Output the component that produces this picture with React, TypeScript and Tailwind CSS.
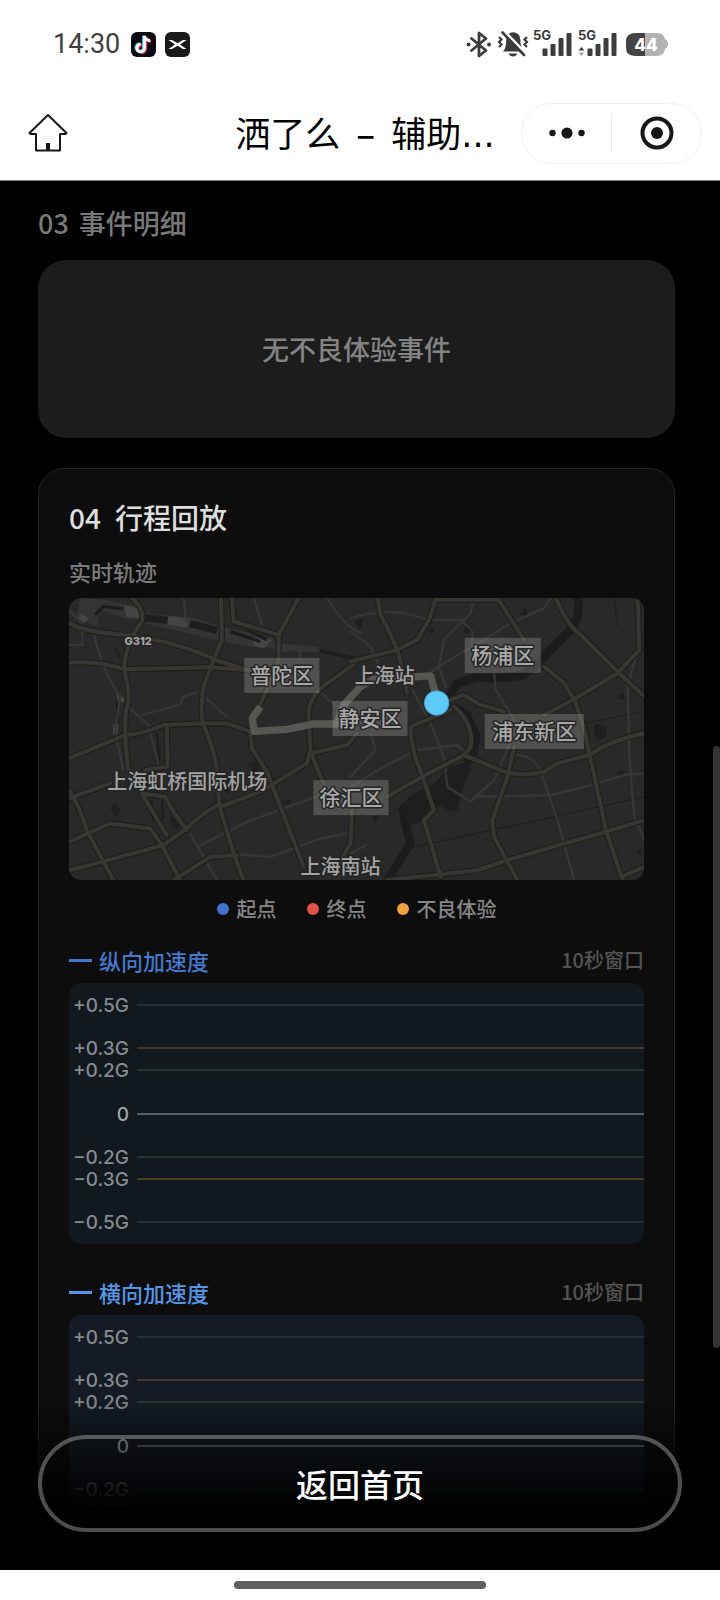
import React from "react";

const MAJOR_WEST = [
  "M27 218 Q120 212 190 238 L450 232 L555 240 L600 250",
  "M27 100 Q80 128 195 135 Q350 155 470 212 L560 240",
  "M215 24 Q255 60 245 95 Q195 160 192 240 Q215 320 198 360 Q190 430 205 540",
  "M482 24 L485 150 Q455 220 430 290 Q420 360 428 400 Q470 500 470 550 L478 650 L520 790 L550 870",
  "M27 505 L195 435 Q240 435 310 405 L428 400 L500 400 L570 425",
  "M515 24 L520 95 L655 135 L655 210 L620 300 L590 360",
  "M715 24 L655 135",
  "M570 425 L575 475 L620 545 L660 650 L730 830",
  "M480 650 L600 605 L740 520 L750 480",
  "M480 640 Q410 680 380 715 L310 765 L125 815 L27 840",
  "M27 600 Q60 650 80 720 L160 870",
  "M27 625 L150 580",
  "M27 755 L150 700 L270 715 L305 765 L360 870",
  "M320 405 L322 530 L255 540",
  "M245 610 L315 620 Q340 670 380 720 M245 610 L320 735",
  "M340 870 L450 800 L530 795",
  "M900 205 Q860 240 800 280 Q745 320 745 370 L750 480 Q770 540 790 580",
  "M750 490 L860 465 L890 430",
  "M875 660 L870 760 L830 830",
];

const MAJOR_EAST = [
  "M82 24 L90 75 Q130 150 145 195 L170 310",
  "M440 30 L255 30 L235 90 L200 150 L140 180 L0 215",
  "M440 24 L520 150",
  "M580 230 L640 280 L670 330 Q700 400 715 490 Q740 600 765 720 L815 870",
  "M615 24 Q650 110 690 135 L800 245 L880 320",
  "M860 24 L865 180 L800 250 L665 330 L580 375",
  "M300 330 L340 315 L390 345 L460 365",
  "M180 410 Q180 470 205 530 L250 660 L220 690 L270 860",
  "M110 620 L215 560 L340 495 L460 545 Q520 560 580 545 L620 520 L715 495 Q780 450 880 430",
  "M490 470 L470 560 L425 690 L430 740 L500 870",
  "M110 870 L380 840 L470 810 L640 760 L765 725 L880 690",
  "M820 856 L880 830",
  "M310 350 Q370 400 360 470 L340 495",
  "M180 410 L300 360",
];

const MINOR_WEST = [
  "M245 375 L360 345 L370 320 L415 305 L500 380",
  "M100 130 Q130 250 180 320 L165 430 L190 540",
  "M27 60 L65 100 L68 165 L30 165",
  "M370 24 L378 95",
  "M580 24 L605 105",
  "M800 24 Q850 110 900 130",
  "M420 765 L560 695 L780 615",
  "M500 790 L630 800 L780 745 L860 730",
  "M390 730 L470 870",
  "M270 430 L295 520",
  "M210 355 L270 410",
  "M655 190 L715 170 L720 210 M770 300 L830 350",
];

const MINOR_EAST = [
  "M0 85 Q80 60 160 70 L240 90 L330 90 L365 125 L365 160",
  "M370 30 L360 70 L280 150 L265 230 L285 290",
  "M600 24 L580 55 L480 100 L400 150 L280 220 L220 260",
  "M430 250 L435 300 L490 390",
  "M500 495 Q560 500 575 560 L620 690 L670 870",
  "M880 550 L830 552 L700 590 L600 615 L380 620",
  "M380 615 L430 570 L490 430",
  "M185 300 L240 400 L280 500 L290 590 L360 635 L380 615",
  "M0 590 L100 530 L200 480 L320 465 L345 490",
  "M865 160 L830 290 L835 500 L850 680 L880 750",
  "M60 430 L75 480 L0 560",
  "M0 125 L60 170 L85 225",
  "M0 790 L45 765",
];

function Roads({ major, minor }: { major: string[]; minor: string[] }) {
  return (
    <g fill="none" strokeLinejoin="round" strokeLinecap="round">
      <g stroke="#363636" strokeWidth="7">
        {minor.map((d) => (
          <path key={d} d={d} />
        ))}
      </g>
      <g stroke="#1f1f1c" strokeWidth="19">
        {major.map((d) => (
          <path key={d} d={d} />
        ))}
      </g>
      <g stroke="#373631" strokeWidth="12">
        {major.map((d) => (
          <path key={d} d={d} />
        ))}
      </g>
    </g>
  );
}

const DISTRICTS = [
  { name: "普陀区", x: 175, y: 60, w: 75 },
  { name: "杨浦区", x: 395, y: 40, w: 76 },
  { name: "静安区", x: 263, y: 103, w: 75 },
  { name: "浦东新区", x: 415, y: 116, w: 99 },
  { name: "徐汇区", x: 244, y: 182, w: 75 },
];

const PLACES = [
  { name: "上海站", x: 315, y: 85 },
  { name: "上海虹桥国际机场", x: 118, y: 191 },
  { name: "上海南站", x: 271, y: 276 },
];

function TrackMap() {
  return (
    <svg
      viewBox="0 0 574 282"
      preserveAspectRatio="xMidYMid slice"
      className="mt-[11px] block h-[282px] w-full rounded-xl bg-[#292929]"
      role="img"
      aria-label="实时轨迹"
    >
      <g transform="translate(-9 -8) scale(0.33333)">
        <g fill="#343434">
          <path d="M60 24 L130 30 L230 50 L245 90 L190 85 L120 60 L110 110 L50 80Z" />
          <path d="M250 70 L400 85 L480 110 L640 145 L640 175 L560 170 L470 150 L250 100Z" />
          <path d="M640 160 L775 170 L775 188 L640 182Z" />
        </g>
        <g fill="#454545">
          <path d="M190 45 L230 55 L240 85 L200 82Z M325 78 L385 88 L380 112 L322 104Z M575 140 L635 150 L610 175 L580 168Z M60 70 L85 85 L75 100 L55 90Z" />
          <path d="M168 310 L195 325 L190 338 L172 332Z M160 405 L175 402 L172 432 L158 432Z" />
        </g>
        <g stroke="#1d1d1d" fill="none">
          <path strokeWidth="22" d="M255 84 L322 92 M390 102 L470 122" />
          <path strokeWidth="10" d="M105 75 L130 50 L190 58 M510 125 L600 155 M560 120 L620 150 M780 183 L880 205" />
          <path strokeWidth="6" d="M165 175 L180 205 M290 430 L298 520 M170 330 L175 400 M275 630 L280 690 M305 630 L308 690" />
        </g>
        <g fill="#202020">
          <path d="M150 655 L165 640 L182 660 L170 680Z M560 520 L590 515 L602 535 L585 550Z M330 675 L360 700 L350 720 L330 700Z M665 635 L690 625 L690 645Z M485 600 L510 590 L505 612Z" />
          <path d="M880 95 L905 85 L905 110Z" />
        </g>
        <g transform="translate(870 0)">
          <g fill="none" stroke="#1c1c1c" strokeLinejoin="round">
            <path strokeWidth="26" d="M680 24 Q695 90 640 140 L570 210 L520 255 Q450 268 380 262 L320 280 L295 320" />
            <path strokeWidth="20" d="M310 345 L350 375 L380 440 L370 490 L345 520" />
            <path strokeWidth="26" d="M155 650 L165 700 L180 760 L110 870" />
          </g>
          <g fill="#1e1e1e">
            <path d="M145 650 L190 610 L250 580 L300 530 L355 515 L360 540 L335 600 L320 660 L290 665 L270 645 L220 690 L180 705Z" />
            <path d="M730 400 L768 410 L765 440 L745 450 L730 435Z M795 325 L815 305 L822 330Z M505 75 L525 55 L530 75Z M340 105 L362 125 L345 130Z M10 95 L38 90 L30 118Z M790 552 L815 542 L818 555Z M855 790 L868 775 L872 798Z M65 680 L85 678 L75 700Z M230 120 L252 112 L245 132Z" />
          </g>
          <path d="M190 770 L540 695 L880 620 M700 400 L880 365 M790 24 L800 110" fill="none" stroke="#1f1f1f" strokeWidth="4" />
        </g>
        <Roads major={MAJOR_WEST} minor={MINOR_WEST} />
        <g transform="translate(870 0)">
          <Roads major={MAJOR_EAST} minor={MINOR_EAST} />
        </g>
        <path
          d="M600 350 L576 385 L582 424 L680 418 L760 402 L830 402 L850 345 L900 290 L940 268 L1110 258 L1124 310"
          fill="none"
          stroke="#565652"
          strokeWidth="22"
          strokeLinejoin="round"
        />
      </g>
      <g fill="#a3a3a3" textAnchor="middle" stroke="#252525" strokeWidth="3" paintOrder="stroke" strokeLinejoin="round">
        <text x="69" y="47" className="font-['Inter',sans-serif] text-[11px] font-extrabold">
          G312
        </text>
        {PLACES.map((p) => (
          <text key={p.name} x={p.x} y={p.y} className="text-[20px] font-medium">
            {p.name}
          </text>
        ))}
      </g>
      {DISTRICTS.map((d) => (
        <g key={d.name}>
          <rect x={d.x} y={d.y} width={d.w} height="35" fill="#c8c8c4" fillOpacity="0.25" />
          <text
            x={d.x + d.w / 2}
            y={d.y + 25}
            textAnchor="middle"
            fill="#a8a8a8"
            stroke="#262626"
            strokeWidth="3"
            paintOrder="stroke"
            strokeLinejoin="round"
            className="text-[21px] font-medium"
          >
            {d.name}
          </text>
        </g>
      ))}
      <circle cx="367" cy="105" r="12" fill="#5ccbfb" stroke="#4fb4e2" />
    </svg>
  );
}

const GRID = [
  { label: "+0.5G", y: 22, tone: "stroke-[#262e35]" },
  { label: "+0.3G", y: 65, tone: "stroke-[#46382a]" },
  { label: "+0.2G", y: 87, tone: "stroke-[#26392f]" },
  { label: "0", y: 131, tone: "stroke-[#5a6067]" },
  { label: "−0.2G", y: 174, tone: "stroke-[#22382a]" },
  { label: "−0.3G", y: 196, tone: "stroke-[#4a3e20]" },
  { label: "−0.5G", y: 239, tone: "stroke-[#252d34]" },
];

function Chart({ title, text, bar, panel }: { title: string; text: string; bar: string; panel: string }) {
  return (
    <section>
      <div className="flex h-8 items-center justify-between font-medium">
        <h3 className={`flex items-center gap-[7px] text-[22px] leading-8 ${text}`}>
          <span className={`h-[3px] w-[23px] ${bar}`} />
          {title}
        </h3>
        <span className="text-[20px] leading-8 text-[#545454]">10秒窗口</span>
      </div>
      <svg className={`mt-[7px] block h-[261px] w-full rounded-xl ${panel}`} role="img" aria-label={title}>
        {GRID.map((g) => (
          <g key={g.label}>
            <line x1="68" x2="100%" y1={g.y} y2={g.y} strokeWidth="2" className={g.tone} />
            <text
              x="60"
              y={g.y + 7}
              textAnchor="end"
              className={
                g.label === "0"
                  ? "fill-[#a3a7ab] font-['Inter',sans-serif] text-[19px] font-medium"
                  : "fill-[#868a8e] font-['Inter',sans-serif] text-[19px] font-medium"
              }
            >
              {g.label}
            </text>
          </g>
        ))}
      </svg>
    </section>
  );
}

function StatusIcons() {
  return (
    <svg width="206" height="42" viewBox="0 -7 206 42" fill="none" aria-hidden="true">
      <g stroke="#3c3c3c" strokeWidth="2.8" strokeLinejoin="round" strokeLinecap="round">
        <path d="M5.500 8.500 L20 20.500 L13 26 V3 L20 8.500 L5.500 20.500" />
      </g>
      <circle cx="2.500" cy="14.500" r="2" fill="#3c3c3c" />
      <circle cx="23" cy="14.500" r="2" fill="#3c3c3c" />
      <path d="M37 21.500 Q40 18 40 13 Q40 5 44 3 Q48 1 52 4 Q54.500 6 54.500 13 Q55 18 57.500 21.500Z" fill="#3c3c3c" />
      <path d="M42.500 23.500 h9 q-1.500 3 -4.500 3 t-4.500 -3Z" fill="#3c3c3c" />
      <path d="M37 0 L61 25" stroke="#fff" strokeWidth="3" />
      <path d="M36.500 2.500 L58 25" stroke="#3c3c3c" strokeWidth="2.600" strokeLinecap="round" />
      <path d="M33 7 l2.500 2.500 -2.500 2.500 2.500 2.500 -2.500 2.500 M61 7 l-2.500 2.500 2.500 2.500 -2.500 2.500 2.500 2.500" stroke="#3c3c3c" strokeWidth="2.200" />
      <g fill="#3c3c3c">
        <text x="67" y="10" className="font-['Inter',sans-serif] text-[13px] font-bold">5G</text>
        <text x="112" y="10" className="font-['Inter',sans-serif] text-[13px] font-bold">5G</text>
        {[0, 45].map((dx) => (
          <g key={dx} transform={`translate(${dx} 0)`}>
            <rect x="76.500" y="18.500" width="5" height="7.500" rx="1" />
            <rect x="84.500" y="14" width="5" height="12" rx="1" />
            <rect x="92.500" y="8" width="5" height="18" rx="1" />
            <rect x="100.500" y="3" width="5" height="23" rx="1" />
          </g>
        ))}
        <path d="M112.500 20.500 L115.500 17 L118.500 20.500Z" />
        <path d="M112.500 22.500 L115.500 26 L118.500 22.500Z" fill="#aaa" />
      </g>
      <path d="M169 3 h22 q7 0 8 6 q3 1 3 5 t-3 5 q-1 7 -8 7 h-22Z" fill="#b3b3b3" />
      <path d="M179 3 h-9 q-10 0 -10 8 v7 q0 8 10 8 h9Z" fill="#444" />
      <text x="180" y="21" textAnchor="middle" fill="#fff" className="font-['Inter',sans-serif] text-[17px] font-extrabold">
        44
      </text>
    </svg>
  );
}

export default function App() {
  return (
    <div className="flex h-screen flex-col bg-black font-['Noto_Sans_CJK_SC',sans-serif]">
      <header className="border-b border-[#7c7c7c] bg-white">
        <div className="flex h-[88px] items-center justify-between pl-[53px] pr-12">
          <div className="flex items-center gap-[9px]">
            <span className="w-[69px] font-['Roboto',sans-serif] text-[27px] leading-8 text-[#3f3f3f]">14:30</span>
            <svg width="25" height="25" viewBox="0 0 25 25" aria-hidden="true">
              <rect width="25" height="25" rx="6" fill="#0c0b12" />
              <g fill="none" strokeWidth="2.800">
                <path d="M13.500 4 V16 a3.800 3.800 0 1 1 -3.800 -3.800 M13.500 4 q1 4.500 5.500 4.500" stroke="#3fd8dc" transform="translate(-1 -0.500)" />
                <path d="M13.500 4 V16 a3.800 3.800 0 1 1 -3.800 -3.800 M13.500 4 q1 4.500 5.500 4.500" stroke="#ec3a62" transform="translate(1.200 0.800)" />
                <path d="M13.500 4 V16 a3.800 3.800 0 1 1 -3.800 -3.800 M13.500 4 q1 4.500 5.500 4.500" stroke="#fff" />
              </g>
            </svg>
            <svg width="25" height="25" viewBox="0 0 25 25" aria-hidden="true">
              <rect width="25" height="25" rx="6" fill="#1a1a18" />
              <path d="M3.500 8 L7 8 L12.500 11.200 L18 8 L21.500 8 L15 12.500 L21.500 17 L18 17 L12.500 13.800 L7 17 L3.500 17 L10 12.500Z" fill="#fff" />
            </svg>
          </div>
          <StatusIcons />
        </div>
        <div className="flex h-[92px] items-center pb-[2px]">
          <div className="flex flex-1 pl-7">
            <button type="button" aria-label="首页">
              <svg width="40" height="40" viewBox="0 0 40 40" fill="none" stroke="#171717" strokeWidth="2" strokeLinejoin="round">
                <path d="M20 2 L38.500 20 L37.500 21 H32 V37.500 H8 V21 H2.500 L1.500 20Z" />
                <path d="M18 30 h4 v7 h-4Z" fill="#171717" stroke="none" />
              </svg>
            </button>
          </div>
          <h1 className="flex gap-4 text-[35px] leading-[48px] text-black">
            <span>洒了么</span>
            <span className="font-medium">–</span>
            <span>
              辅助<span className="font-['DejaVu_Sans',sans-serif]">...</span>
            </span>
          </h1>
          <div className="flex flex-1 justify-end pr-[18px]">
            <div className="flex h-[61px] w-[181px] items-center rounded-full border border-[#f0f0f0]">
              <button type="button" aria-label="更多" className="flex h-full flex-1 items-center justify-center">
                <svg width="36" height="12" viewBox="0 0 36 12" fill="#171717">
                  <circle cx="3.500" cy="6" r="3.200" />
                  <circle cx="18" cy="6" r="5.600" />
                  <circle cx="32.500" cy="6" r="3.200" />
                </svg>
              </button>
              <span className="h-10 w-px bg-[#ececec]" />
              <button type="button" aria-label="关闭" className="flex h-full flex-1 items-center justify-center">
                <svg width="34" height="34" viewBox="0 0 34 34">
                  <circle cx="17" cy="17" r="14.500" fill="none" stroke="#171717" strokeWidth="4" />
                  <circle cx="17" cy="17" r="6" fill="#171717" />
                </svg>
              </button>
            </div>
          </div>
        </div>
      </header>

      <div className="relative min-h-0 flex-1">
        <main className="h-full overflow-y-auto pb-32 pl-[38px] pr-[45px] [scrollbar-width:none]">
          <h2 className="mt-6 flex gap-2.5 text-[27px] font-medium leading-9 text-[#797979]">
            <span>03</span>
            <span>事件明细</span>
          </h2>
          <div className="mt-[19px] rounded-[28px] bg-[#1c1c1c] py-[71px] text-center text-[27px] font-medium leading-9 text-[#838383]">
            无不良体验事件
          </div>

          <div className="mt-[30px] rounded-[26px] border border-[#242424] bg-[#0d0d0d] px-[30px] pb-8 pt-[30px]">
            <h2 className="flex gap-3.5 text-[28px] font-medium leading-9 text-[#dedede]">
              <span>04</span>
              <span>行程回放</span>
            </h2>
            <p className="mt-5 text-[22px] font-medium leading-8 text-[#7c7c7c]">实时轨迹</p>
            <TrackMap />
            <ul className="mt-[13px] flex justify-center gap-[30px] text-[20px] font-medium leading-8 text-[#868686]">
              <li className="flex items-center gap-2">
                <span className="size-3 rounded-full bg-[#3f74cf]" />
                起点
              </li>
              <li className="flex items-center gap-2">
                <span className="size-3 rounded-full bg-[#e25247]" />
                终点
              </li>
              <li className="flex items-center gap-2">
                <span className="size-3 rounded-full bg-[#f0a040]" />
                不良体验
              </li>
            </ul>
            <div className="mt-[19px] flex flex-col gap-8">
              <Chart title="纵向加速度" text="text-[#4478cc]" bar="bg-[#4478cc]" panel="bg-[#11181e]" />
              <Chart title="横向加速度" text="text-[#5596e6]" bar="bg-[#5596e6]" panel="bg-[#141b24]" />
            </div>
          </div>
        </main>

        <span className="absolute right-0 top-[565px] h-[602px] w-[7px] rounded-full bg-[#333]" />

        <div className="absolute inset-x-0 bottom-0 bg-linear-to-t from-black from-35% to-transparent p-[38px]">
          <button
            type="button"
            className="block w-full rounded-full border-4 border-white/30 py-5 text-center text-[32px] font-medium leading-[49px] text-white"
          >
            返回首页
          </button>
        </div>
      </div>

      <footer className="flex h-[30px] justify-center bg-white pt-[11px]">
        <span className="h-2 w-[252px] rounded-full bg-[#5e5e5e]" />
      </footer>
    </div>
  );
}
